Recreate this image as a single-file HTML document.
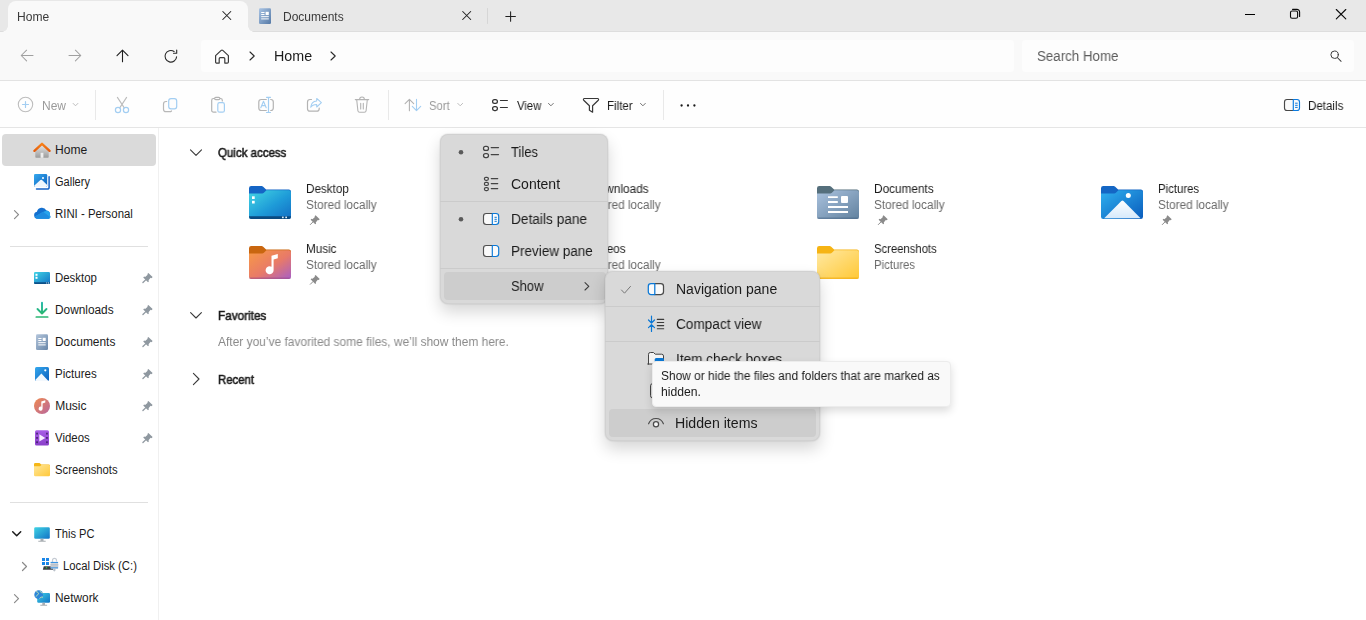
<!DOCTYPE html>
<html lang="en">
<head>
<meta charset="utf-8">
<title>Home - File Explorer</title>
<style>
*{box-sizing:border-box;margin:0;padding:0}
html,body{width:1366px;height:620px;overflow:hidden;background:#fff}
body{font-family:"Liberation Sans",sans-serif;color:#1b1b1b;font-size:12px;position:relative}
.abs{position:absolute}
.t{position:absolute;white-space:nowrap;line-height:16px;will-change:transform;transform-origin:0 0}
.t.nl{will-change:auto}
svg{position:absolute;overflow:visible}
/* ---------- title / tab bar ---------- */
#tabbar{left:0;top:0;width:1366px;height:32px;background:#e8e8e8}
#tab1{left:8px;top:1px;width:240px;height:31px;background:#f9f9f9;border-radius:8px 8px 0 0}
#tab1:before,#tab1:after{content:"";position:absolute;bottom:0;width:6px;height:6px;background:radial-gradient(circle at 0 0,rgba(249,249,249,0) 5.500px,#f9f9f9 6px)}
#tab1:before{left:-6px}
#tab1:after{right:-6px;background:radial-gradient(circle at 100% 0,rgba(249,249,249,0) 5.500px,#f9f9f9 6px)}
/* ---------- address bar ---------- */
#addr{left:0;top:32px;width:1366px;height:48px;background:#f9f9f9}
#addrline{left:0;top:80px;width:1366px;height:1px;background:#e3e3e3}
#crumb{left:201px;top:40px;width:813px;height:32px;background:#fdfdfd;border-radius:4px}
#search{left:1022px;top:40px;width:332px;height:32px;background:#fdfdfd;border-radius:4px}
/* ---------- toolbar ---------- */
#tool{left:0;top:81px;width:1366px;height:46px;background:#fefefe}
#toolline{left:0;top:127px;width:1366px;height:1px;background:#e5e5e5}
.vsep{width:1px;background:#e9e9e9}
/* ---------- nav pane ---------- */
#nav{left:0;top:128px;width:158px;height:492px;background:#fff}
#navdiv{left:158px;top:128px;width:1px;height:492px;background:#f0f0f0}
#navsel{left:2px;top:134px;width:154px;height:32px;background:#dadada;border-radius:4px}
.hsep{left:10px;width:138px;height:1px;background:#e0e0e0}
.nl{font-size:12px;color:#1b1b1b}
/* ---------- main ---------- */
.hd{font-size:12px;color:#1b1b1b;-webkit-text-stroke:0.55px #1b1b1b}
.nm{font-size:12px;color:#1b1b1b}
.sub{font-size:12px;color:#6a6a6a}
/* ---------- menus ---------- */
.menu{background:#d9d9d9;border-radius:8px;box-shadow:0 8px 16px rgba(0,0,0,.16),0 0 2px rgba(0,0,0,.18),inset 0 0 0 1px rgba(0,0,0,.035)}
.mi{font-size:14px;color:#1b1b1b;line-height:20px}
.msep{height:1px;background:#cbcbcb}
.mhl{background:#cdcdcd;border-radius:4px}
#tip{left:651.500px;top:360.500px;width:299px;height:46.500px;background:#f9f9f9;border:1px solid #ececec;border-radius:4px;box-shadow:0 4px 8px rgba(0,0,0,.14)}
</style>
</head>
<body>
<!-- TABBAR -->
<div id="tabbar" class="abs"></div>
<div class="abs" style="left:0;top:31px;width:1366px;height:1px;background:#dddddd"></div>
<div id="tab1" class="abs"></div>
<div class="t" style="left:17.40px;top:9px;transform:scaleX(1.0051);font-size:12px;color:#3a3a3a">Home</div>
<div class="t" style="left:282.80px;top:9px;transform:scaleX(0.9936);font-size:12px;color:#3a3a3a">Documents</div>
<!-- ADDRESS -->
<div id="addr" class="abs"></div>
<div id="addrline" class="abs"></div>
<div id="crumb" class="abs"></div>
<div id="search" class="abs"></div>
<div class="t" style="left:273.58px;top:47px;transform:scaleX(1.0203);font-size:14px;line-height:18px;color:#1b1b1b">Home</div>
<div class="t" style="left:1037.30px;top:47px;transform:scaleX(0.9521);font-size:14px;line-height:18px;color:#5c5c5c">Search Home</div>

<!-- ICONS: title bar -->
<svg style="left:0;top:0" width="1366" height="128" viewBox="0 0 1366 128" fill="none" stroke-linecap="round" stroke-linejoin="round">
 <!-- tab close buttons -->
 <path d="M222.800 11.500l8 8M230.800 11.500l-8 8" stroke="#1f1f1f" stroke-width="1.050"/>
 <path d="M462.700 11.500l8 8M470.700 11.500l-8 8" stroke="#1f1f1f" stroke-width="1.050"/>
 <path d="M487.5 8.5v15" stroke="#d6d6d6" stroke-width="1"/>
 <path d="M505.8 16.5h9.6M510.6 11.7v9.6" stroke="#1f1f1f" stroke-width="1.05"/>
<!-- tab2 icon -->
 <defs><linearGradient id="gTabDoc" x1="0" y1="0" x2="1" y2="1"><stop offset="0" stop-color="#a9c4e4"/><stop offset="1" stop-color="#5579a6"/></linearGradient></defs>
 <rect x="259" y="8.200" width="12" height="15.800" rx="1.200" fill="url(#gTabDoc)" stroke="none"/>
 <path d="M261.200 12.500h3.300M261.200 14.500h3.300M261.200 16.700h7.600M261.200 18.900h7.600" stroke="#fff" stroke-width="1" stroke-linecap="butt"/>
 <rect x="265.600" y="11.800" width="3.200" height="3.300" fill="#fff" stroke="none"/>
 <!-- window controls -->
 <path d="M1245 14.500h10" stroke="#000" stroke-width="1" stroke-linecap="butt"/>
 <rect x="1290.500" y="11" width="7.100" height="7.300" rx="1.600" stroke="#0a0a0a" stroke-width="1.100"/>
 <path d="M1292.600 9.400h4.300a2.700 2.700 0 0 1 2.700 2.700v4.300" stroke="#0a0a0a" stroke-width="1.100"/>
 <path d="M1336.300 9.500l9.500 9.300M1345.800 9.500l-9.500 9.300" stroke="#0a0a0a" stroke-width="1.100"/>
 <!-- nav arrows -->
 <path d="M33 55.5H21.3M26.6 50.2l-5.4 5.3 5.4 5.4" stroke="#a0a0a0" stroke-width="1.05"/>
 <path d="M69 55.5h11.7M75.4 50.2l5.4 5.3-5.4 5.4" stroke="#a0a0a0" stroke-width="1.05"/>
 <path d="M122.5 61.8V50.3M117 55.7l5.5-5.5 5.5 5.5" stroke="#1f1f1f" stroke-width="1.1"/>
 <path d="M176.600 56.700a5.800 5.800 0 1 1-2.500-5.200M176.700 50v3.200h-3.200" stroke="#2a2a2a" stroke-width="1.100"/>
 <!-- breadcrumb home -->
 <path d="M215.6 55.6l5.6-5.2a1.2 1.2 0 0 1 1.6 0l5.6 5.2v6.3a1.2 1.2 0 0 1-1.2 1.2h-2.4v-4.4a1 1 0 0 0-1-1h-3.600a1 1 0 0 0-1 1v4.400h-2.400a1.200 1.200 0 0 1-1.200-1.200z" stroke="#3a3a3a" stroke-width="1.2"/>
 <path d="M250 52l4.200 4-4.200 4" stroke="#2a2a2a" stroke-width="1.1"/>
 <path d="M331 52l4.200 4-4.200 4" stroke="#2a2a2a" stroke-width="1.1"/>
 <!-- search -->
 <circle cx="1334.600" cy="54.700" r="3.700" stroke="#3a3a3a" stroke-width="1"/>
 <path d="M1337.300 57.500l3.800 3.800" stroke="#3a3a3a" stroke-width="1.050"/>
</svg>
<!-- TOOLBAR -->
<div id="tool" class="abs"></div>
<div id="toolline" class="abs"></div>
<div class="t" style="left:41.90px;top:98px;transform:scaleX(0.9860);font-size:12px;color:#9a9a9a">New</div>
<div class="t" style="left:429.20px;top:98px;transform:scaleX(0.9350);font-size:12px;color:#9a9a9a">Sort</div>
<div class="t" style="left:516.50px;top:98px;transform:scaleX(0.9377);font-size:12px;color:#1b1b1b">View</div>
<div class="t" style="left:607.40px;top:98px;transform:scaleX(0.9599);font-size:12px;color:#1b1b1b">Filter</div>
<div class="t" style="left:1308.00px;top:98px;transform:scaleX(0.9624);font-size:12px;color:#1b1b1b">Details</div>
<div class="abs vsep" style="left:95px;top:90px;height:30px"></div>
<div class="abs vsep" style="left:388px;top:90px;height:30px"></div>
<div class="abs vsep" style="left:663px;top:90px;height:30px"></div>

<!-- ICONS: toolbar -->
<svg style="left:0;top:81px" width="1366" height="46" viewBox="0 81 1366 46" fill="none" stroke-linecap="round" stroke-linejoin="round" stroke-width="1.200">
 <!-- New -->
 <circle cx="25.500" cy="104.500" r="7.200" stroke="#bdbdbd" stroke-width="1.100"/>
 <path d="M22.500 104.500h6M25.500 101.500v6" stroke="#a3cef2"/>
 <path d="M73.100 103.400l2.400 2.400 2.400-2.400" stroke="#bcbcbc" stroke-width="1"/>
 <!-- Cut -->
 <path d="M117.400 97.400l6.900 10.500M126.600 97.400l-6.900 10.500" stroke="#bcbcbc" stroke-width="1.100"/>
 <circle cx="118" cy="110" r="2.600" stroke="#a3cef2"/>
 <circle cx="126" cy="110" r="2.600" stroke="#a3cef2"/>
 <!-- Copy -->
 <path d="M166.700 101.500h-0.700a2.500 2.500 0 0 0-2.500 2.500v5.200a2.500 2.500 0 0 0 2.500 2.500h3.800a2.500 2.500 0 0 0 1.700-0.700" stroke="#b8b8b8"/>
 <rect x="168.700" y="98.600" width="8" height="10.200" rx="2.300" stroke="#a3cef2" fill="#fdfdfd"/>
 <!-- Paste -->
 <path d="M216 112.200h-2.500a1.800 1.800 0 0 1-1.800-1.800v-10.100a1.800 1.800 0 0 1 1.800-1.800h1M220 98.500h0.500a1.800 1.800 0 0 1 1.800 1.800v0.700" stroke="#b4b4b4"/>
 <rect x="214.600" y="97.400" width="5.300" height="2.300" rx="1.150" stroke="#b4b4b4" fill="#fdfdfd"/>
 <rect x="217.800" y="102.700" width="6.600" height="9.500" rx="1.800" stroke="#a3cef2" fill="#fdfdfd"/>
 <!-- Rename -->
 <path d="M266.300 99.500h-5a2.500 2.500 0 0 0-2.500 2.500v6a2.500 2.500 0 0 0 2.500 2.500h5M270.700 99.500h0.100a2.500 2.500 0 0 1 2.500 2.500v6a2.500 2.500 0 0 1-2.500 2.500h-0.100" stroke="#b4b4b4"/>
 <path d="M266.500 97.300h4M266.500 112.500h4M268.500 97.300v15.200" stroke="#a3cef2"/>
 <path d="M260.800 107.700l2.700-6.500 2.700 6.500M261.800 105.600h3.400" stroke="#a3cef2" stroke-width="1.100"/>
 <!-- Share -->
 <path d="M311.500 99.500h-1.500a2.500 2.500 0 0 0-2.500 2.500v6.700a2.500 2.500 0 0 0 2.500 2.500h6.700a2.500 2.500 0 0 0 2.500-2.500v-0.700" stroke="#b4b4b4"/>
 <path d="M316.700 98.400l4.700 4.300-4.700 4.300v-2.600c-3 0-4.800 0.800-6 2.800 0.300-3.500 2.300-6 6-6.300z" stroke="#a3cef2" stroke-width="1.050"/>
 <!-- Delete -->
 <path d="M355.300 99.600h13.400M359.600 99.400a2.400 2.400 0 0 1 4.800 0M356.700 99.800l1.200 10.900a1.800 1.800 0 0 0 1.800 1.600h4.600a1.800 1.800 0 0 0 1.800-1.600l1.200-10.900M360.700 103.200v5.700M363.300 103.200v5.700" stroke="#b4b4b4" stroke-width="1.100"/>
 <!-- Sort -->
 <path d="M409.400 110.700V99.300M405.100 103.600l4.300-4.300 4.300 4.300" stroke="#b2b2b2" stroke-width="1.100"/>
 <path d="M416.500 99.200v11.400M412.300 106.400l4.200 4.300 4.200-4.300" stroke="#a3cef2" stroke-width="1.100"/>
 <path d="M457.800 103.400l2.400 2.400 2.400-2.400" stroke="#bcbcbc" stroke-width="1"/>
 <!-- View -->
 <rect x="492.600" y="99.500" width="4.800" height="3.900" rx="1.900" stroke="#333" stroke-width="1.250"/>
 <rect x="492.600" y="106.600" width="4.800" height="3.900" rx="1.900" stroke="#333" stroke-width="1.250"/>
 <path d="M500.400 100.500h7M500.400 107.500h7" stroke="#333" stroke-width="1.150"/>
 <path d="M548.500 103.400l2.400 2.400 2.400-2.400" stroke="#707070" stroke-width="1"/>
 <!-- Filter -->
 <path d="M584.400 98.500h13.200a1 1 0 0 1 0.700 1.700l-5.700 5.500v6.500l-3.200-1.900v-4.600l-5.700-5.500a1 1 0 0 1 0.700-1.700z" stroke="#383838" stroke-width="1.200" fill="#fafafa"/>
 <path d="M640.500 103.400l2.400 2.400 2.400-2.400" stroke="#707070" stroke-width="1"/>
 <!-- more -->
 <circle cx="681.600" cy="105.500" r="1.150" fill="#1b1b1b"/>
 <circle cx="688" cy="105.500" r="1.150" fill="#1b1b1b"/>
 <circle cx="694.400" cy="105.500" r="1.150" fill="#1b1b1b"/>
 <!-- Details -->
 <rect x="1284.500" y="99.500" width="15" height="11" rx="2.500" fill="#fafafa"/>
 <path d="M1293.300 99.500h-6.300a2.500 2.500 0 0 0-2.500 2.500v6a2.500 2.500 0 0 0 2.500 2.500h6.300" stroke="#484848" stroke-width="1.150"/>
 <path d="M1293.300 99.500h3.700a2.500 2.500 0 0 1 2.500 2.500v6a2.500 2.500 0 0 1-2.500 2.500h-3.700z" stroke="#0a7adf" stroke-width="1.150"/>
 <path d="M1295.100 103.200h2.600M1295.100 105.300h2.600M1295.100 107.400h2.600" stroke="#0a7adf" stroke-width="1" stroke-linecap="butt"/>
</svg>
<!-- NAV -->
<div id="nav" class="abs"></div>
<div id="navdiv" class="abs"></div>
<div id="navsel" class="abs"></div>
<div class="t nl" style="left:55.40px;top:142px;transform:scaleX(1.0051);">Home</div>
<div class="t nl" style="left:55.40px;top:174px;transform:scaleX(0.9182);">Gallery</div>
<div class="t nl" style="left:55.40px;top:206px;transform:scaleX(0.9489);">RINI - Personal</div>
<div class="abs hsep" style="top:246px"></div>
<div class="t nl" style="left:55.40px;top:270px;transform:scaleX(0.9516);">Desktop</div>
<div class="t nl" style="left:55.40px;top:302px;transform:scaleX(0.9871);">Downloads</div>
<div class="t nl" style="left:55.40px;top:334px;transform:scaleX(0.9952);">Documents</div>
<div class="t nl" style="left:55.20px;top:366px;transform:scaleX(0.9620);">Pictures</div>
<div class="t nl" style="left:55.20px;top:398px;">Music</div>
<div class="t nl" style="left:55.00px;top:430px;transform:scaleX(0.9513);">Videos</div>
<div class="t nl" style="left:55.20px;top:462px;transform:scaleX(0.9385);">Screenshots</div>
<div class="abs hsep" style="top:502px"></div>
<div class="t nl" style="left:55.00px;top:526px;transform:scaleX(0.9254);">This PC</div>
<div class="t nl" style="left:62.90px;top:558px;transform:scaleX(0.9392);">Local Disk (C:)</div>
<div class="t nl" style="left:55.30px;top:590px;transform:scaleX(0.9887);">Network</div>

<!-- ICONS: nav pane -->
<svg style="left:0;top:128px" width="158" height="492" viewBox="0 128 158 492" fill="none" stroke-linecap="round" stroke-linejoin="round">
 <defs>
  <linearGradient id="gHomeB" x1="0" y1="0" x2="0" y2="1"><stop offset="0" stop-color="#e9e9e9"/><stop offset="1" stop-color="#9b9b9b"/></linearGradient>
  <linearGradient id="gRoof" x1="0" y1="143" x2="0" y2="152" gradientUnits="userSpaceOnUse"><stop offset="0" stop-color="#f9841a"/><stop offset="1" stop-color="#e2570a"/></linearGradient>
  <linearGradient id="gBlue" x1="0" y1="0" x2="1" y2="1"><stop offset="0" stop-color="#35a9ee"/><stop offset="1" stop-color="#0c5fbd"/></linearGradient>
  <linearGradient id="gCyan" x1="0" y1="0" x2="1" y2="1"><stop offset="0" stop-color="#3fd3e4"/><stop offset="1" stop-color="#1273c6"/></linearGradient>
  <linearGradient id="gDl" x1="0" y1="0" x2="0" y2="1"><stop offset="0" stop-color="#1fb7a6"/><stop offset="1" stop-color="#2bb673"/></linearGradient>
  <linearGradient id="gDoc" x1="0" y1="0" x2="1" y2="1"><stop offset="0" stop-color="#b4c6dc"/><stop offset="1" stop-color="#6886a8"/></linearGradient>
  <linearGradient id="gMus" x1="0" y1="0" x2="1" y2="1"><stop offset="0" stop-color="#f08a4e"/><stop offset="1" stop-color="#b8679f"/></linearGradient>
  <linearGradient id="gVid" x1="0" y1="0" x2="0" y2="1"><stop offset="0" stop-color="#a75fe6"/><stop offset="1" stop-color="#8a3fc9"/></linearGradient>
  <linearGradient id="gFol" x1="0" y1="0" x2="1" y2="1"><stop offset="0" stop-color="#ffe79a"/><stop offset="1" stop-color="#ffc83a"/></linearGradient>
  <linearGradient id="gCloud" x1="0" y1="0" x2="0" y2="1"><stop offset="0" stop-color="#1b6fd1"/><stop offset="1" stop-color="#2a9df0"/></linearGradient>
 </defs>
 <!-- Home -->
 <path d="M35.300 150.200l6.700-6 6.700 6v6.800a0.800 0.800 0 0 1-0.800 0.800h-11.800a0.800 0.800 0 0 1-0.800-0.800z" fill="url(#gHomeB)"/>
 <rect x="40.600" y="152.800" width="2.800" height="5" fill="#ededed"/>
 <path d="M34.400 150.900l7.600-7.100 7.600 7.100" stroke="url(#gRoof)" stroke-width="2.300"/>
 <!-- Gallery -->
 <path d="M49.100 176.800v10.700a1.600 1.600 0 0 1-1.600 1.600h-11" stroke="#1763c6" stroke-width="1.500"/>
 <rect x="34" y="174" width="13.200" height="12.900" rx="1.300" fill="url(#gBlue)"/>
 <path d="M34.100 185.800l6.300-5.800a1.200 1.200 0 0 1 1.600 0l5.200 4.900v0.700a1.300 1.300 0 0 1-1.300 1.300h-10.600a1.300 1.300 0 0 1-1.200-1.100z" fill="#f1f7fd"/>
 <circle cx="43" cy="177.900" r="1" fill="#fff"/>
 <!-- OneDrive -->
 <path d="M37.800 218.800a3.600 3.600 0 0 1-0.900-7.100 5.100 5.100 0 0 1 9.500-1.300 3.700 3.700 0 0 1 3.500 4.800 2.500 2.500 0 0 1-1.200 3.600z" fill="#1470cf"/>
 <path d="M37.800 218.800a3.600 3.600 0 0 1-2.800-2.300l8-4.600 3.600-1.400a3.700 3.700 0 0 1 3.300 4.700 2.500 2.500 0 0 1-1.200 3.600z" fill="#28a4ec"/>
 <path d="M35 216.500l8-4.700 6.500 4.600a2.500 2.500 0 0 1-0.800 2.400h-10.900a3.600 3.600 0 0 1-2.800-2.300z" fill="#1f8ce0"/>
 <path d="M14.500 210.700l4 4-4 4" stroke="#8a8a8a" stroke-width="1.200"/>
 <!-- Desktop -->
 <rect x="34" y="272" width="16" height="12" rx="1.300" fill="url(#gCyan)"/>
 <path d="M34 282.300h16v0.400a1.300 1.300 0 0 1-1.300 1.300h-13.400a1.300 1.300 0 0 1-1.300-1.300z" fill="#0c4f86"/>
 <rect x="35.500" y="273.800" width="2" height="2" fill="#fff"/><rect x="35.500" y="276.800" width="2" height="2" fill="#fff"/>
 <rect x="46.200" y="282.500" width="1" height="1" fill="#e9f4fb"/><rect x="48" y="282.500" width="1" height="1" fill="#e9f4fb"/>
 <!-- Downloads -->
 <path d="M42 302.800v10.400M37.500 309l4.500 4.500 4.500-4.500" stroke="url(#gDl)" stroke-width="1.900"/>
 <path d="M36.300 317h11.400" stroke="#2bb673" stroke-width="1.700"/>
 <!-- Documents -->
 <rect x="36" y="334.300" width="12" height="15.700" rx="1.300" fill="url(#gDoc)"/>
 <path d="M38.300 338.500h3.200M38.300 340.500h3.200M38.300 342.700h7.400M38.300 344.900h7.400" stroke="#fff" stroke-width="1" stroke-linecap="butt"/>
 <rect x="42.700" y="337.800" width="3" height="3.200" fill="#fff"/>
 <!-- Pictures -->
 <rect x="35" y="367" width="14" height="14" rx="1.500" fill="url(#gBlue)"/>
 <path d="M35.200 380l6.200-6.600 6.800 7.300a1.500 1.500 0 0 1-0.700 0.300h-11a1.500 1.500 0 0 1-1.300-1z" fill="#f3f8fd"/>
 <circle cx="45.300" cy="370.300" r="1.100" fill="#fff"/>
 <!-- Music -->
 <circle cx="42" cy="406" r="8" fill="url(#gMus)"/>
 <path d="M41.300 401.500l4-1.200v2.300l-2.700 0.800v5.300a2 2 0 1 1-1.300-1.900z" fill="#fff"/>
 <!-- Videos -->
 <rect x="35" y="430.300" width="14" height="15.200" rx="1.500" fill="url(#gVid)"/>
 <path d="M39.300 434.300l6 3.600-6 3.600z" fill="#f6eefe"/>
 <g fill="#3d1c66"><rect x="36.300" y="432.700" width="1.500" height="1.800"/><rect x="36.300" y="437" width="1.500" height="1.800"/><rect x="36.300" y="441.300" width="1.500" height="1.800"/><rect x="46.200" y="432.700" width="1.500" height="1.800"/><rect x="46.200" y="437" width="1.500" height="1.800"/><rect x="46.200" y="441.300" width="1.500" height="1.800"/></g>
 <!-- Screenshots -->
 <path d="M34 464.200a1.300 1.300 0 0 1 1.300-1.300h4.200l1.800 1.700h7.400a1.300 1.300 0 0 1 1.300 1.300v2h-16z" fill="#f5b615"/>
 <path d="M34 466.200h6l1.500-1.300h7.200a1.300 1.300 0 0 1 1.300 1.300v8.800a1.300 1.300 0 0 1-1.300 1.300h-13.400a1.300 1.300 0 0 1-1.300-1.300z" fill="url(#gFol)"/>
 <!-- This PC -->
 <path d="M12.700 531.800l4 4 4-4" stroke="#1b1b1b" stroke-width="1.500"/>
 <rect x="34.200" y="527.300" width="15.600" height="11.400" rx="1.300" fill="url(#gCyan)"/>
 <path d="M40.500 538.700h3v2h-3zM38.300 540.700h7.400v1h-7.400z" fill="#a9aeb3" stroke="none"/>
 <!-- Local disk -->
 <path d="M22.500 562.500l4 4-4 4" stroke="#8a8a8a" stroke-width="1.200"/>
 <g fill="#1a86e8"><rect x="42" y="558" width="3" height="3"/><rect x="46" y="558" width="3" height="3"/><rect x="42" y="562" width="3" height="3"/><rect x="46" y="562" width="3" height="3"/></g>
 <path d="M43.800 566.200h9.200v3.500h-10.200z" fill="#3c3f44"/>
 <rect x="45.800" y="567.200" width="1.300" height="1.100" fill="#36d84a"/>
 <path d="M52.500 562v-1.600a2 2 0 0 1 4 0v0.600" stroke="#c5cbd3" stroke-width="1.200"/>
 <rect x="50.600" y="561.900" width="7.500" height="6.800" rx="0.800" fill="#cfd4db"/>
 <rect x="50.600" y="561.900" width="7.500" height="1.100" fill="#3b95e4"/>
 <rect x="50.600" y="567.300" width="7.500" height="1.100" fill="#3b95e4"/>
 <path d="M50.600 564.600h7.500M50.600 566h7.500" stroke="#aab2bd" stroke-width="0.600"/>
 <path d="M53.200 568.700h2.300v1.600a1.150 1.150 0 0 1-2.300 0z" fill="#b9c0c9"/>
 <!-- Network -->
 <path d="M14.500 594.700l4 4-4 4" stroke="#8a8a8a" stroke-width="1.200"/>
 <rect x="37.200" y="593" width="12.800" height="9.700" rx="1.200" fill="url(#gCyan)"/>
 <path d="M42.300 602.700h2.700v2h-2.700zM40.300 604.700h6.800v1h-6.800z" fill="#a9aeb3"/>
 <circle cx="38.700" cy="594.700" r="4.400" fill="#2d86d9"/>
 <path d="M36.500 591.700c1.300 0.300 2.300 1.200 2 2.200s-1.800 1-2.300 2.300M40.300 591c-0.300 1 0.700 1.600 2 1.800M39.800 598.300c0.300-1.100 1.500-1.400 2.800-1.200" stroke="#bfe3b4" stroke-width="1"/>
 <!--pins--><path d="M152.62 277.12L151.56 278.18L150.64 277.83L148.52 280.37L148.94 281.36L148.03 282.28L143.22 277.47L144.14 276.56L145.13 276.98L147.67 274.86L147.32 273.94L148.38 272.88z" fill="#8f98a0"/><path d="M145.90 279.60 L142.93 282.57" stroke="#8f98a0" stroke-width="1.3" stroke-linecap="round"/><path d="M152.62 309.12L151.56 310.18L150.64 309.83L148.52 312.37L148.94 313.36L148.03 314.28L143.22 309.47L144.14 308.56L145.13 308.98L147.67 306.86L147.32 305.94L148.38 304.88z" fill="#8f98a0"/><path d="M145.90 311.60 L142.93 314.57" stroke="#8f98a0" stroke-width="1.3" stroke-linecap="round"/><path d="M152.62 341.12L151.56 342.18L150.64 341.83L148.52 344.37L148.94 345.36L148.03 346.28L143.22 341.47L144.14 340.56L145.13 340.98L147.67 338.86L147.32 337.94L148.38 336.88z" fill="#8f98a0"/><path d="M145.90 343.60 L142.93 346.57" stroke="#8f98a0" stroke-width="1.3" stroke-linecap="round"/><path d="M152.62 373.12L151.56 374.18L150.64 373.83L148.52 376.37L148.94 377.36L148.03 378.28L143.22 373.47L144.14 372.56L145.13 372.98L147.67 370.86L147.32 369.94L148.38 368.88z" fill="#8f98a0"/><path d="M145.90 375.60 L142.93 378.57" stroke="#8f98a0" stroke-width="1.3" stroke-linecap="round"/><path d="M152.62 405.12L151.56 406.18L150.64 405.83L148.52 408.37L148.94 409.36L148.03 410.28L143.22 405.47L144.14 404.56L145.13 404.98L147.67 402.86L147.32 401.94L148.38 400.88z" fill="#8f98a0"/><path d="M145.90 407.60 L142.93 410.57" stroke="#8f98a0" stroke-width="1.3" stroke-linecap="round"/><path d="M152.62 437.12L151.56 438.18L150.64 437.83L148.52 440.37L148.94 441.36L148.03 442.28L143.22 437.47L144.14 436.56L145.13 436.98L147.67 434.86L147.32 433.94L148.38 432.88z" fill="#8f98a0"/><path d="M145.90 439.60 L142.93 442.57" stroke="#8f98a0" stroke-width="1.3" stroke-linecap="round"/>
</svg>
<!-- MAIN -->
<div class="t hd" style="left:218.00px;top:145px;transform:scaleX(0.9586);">Quick access</div>
<div class="t hd" style="left:218.00px;top:308px;transform:scaleX(0.9808);">Favorites</div>
<div class="t hd" style="left:218.30px;top:372px;transform:scaleX(0.9486);">Recent</div>
<div class="t sub" style="left:218.00px;top:334px;transform:scaleX(0.9956);color:#8a8a8a">After you’ve favorited some files, we’ll show them here.</div>

<div class="t nm" style="left:306.30px;top:181px;transform:scaleX(0.9741);">Desktop</div>
<div class="t sub" style="left:306.40px;top:197px;transform:scaleX(0.9801);">Stored locally</div>
<div class="t nm" style="left:306.30px;top:241px;transform:scaleX(0.9733);">Music</div>
<div class="t sub" style="left:306.40px;top:257px;transform:scaleX(0.9801);">Stored locally</div>
<div class="t nm" style="left:590.30px;top:181px;transform:scaleX(0.9888);">Downloads</div>
<div class="t sub" style="left:590.40px;top:197px;transform:scaleX(0.9801);">Stored locally</div>
<div class="t nm" style="left:590.00px;top:241px;transform:scaleX(0.9760);">Videos</div>
<div class="t sub" style="left:590.40px;top:257px;transform:scaleX(0.9801);">Stored locally</div>
<div class="t nm" style="left:874.30px;top:181px;transform:scaleX(0.9837);">Documents</div>
<div class="t sub" style="left:874.40px;top:197px;transform:scaleX(0.9801);">Stored locally</div>
<div class="t nm" style="left:874.30px;top:241px;transform:scaleX(0.9400);">Screenshots</div>
<div class="t sub" style="left:874.40px;top:257px;transform:scaleX(0.9458);">Pictures</div>
<div class="t nm" style="left:1158.40px;top:181px;transform:scaleX(0.9481);">Pictures</div>
<div class="t sub" style="left:1158.40px;top:197px;transform:scaleX(0.9801);">Stored locally</div>


<!-- ICONS: main -->
<svg style="left:159px;top:128px" width="1207" height="492" viewBox="159 128 1207 492" fill="none" stroke-linecap="round" stroke-linejoin="round">
 <defs>
  <linearGradient id="fDesk" x1="0" y1="0" x2="1" y2="1"><stop offset="0" stop-color="#44d6e3"/><stop offset=".55" stop-color="#1e9bd8"/><stop offset="1" stop-color="#136ec4"/></linearGradient>
  <linearGradient id="fMus" x1="0" y1="0" x2="1" y2="1"><stop offset="0" stop-color="#f89a45"/><stop offset=".55" stop-color="#e87a68"/><stop offset="1" stop-color="#a85fc6"/></linearGradient>
  <linearGradient id="fDoc" x1="0" y1="0" x2="1" y2="1"><stop offset="0" stop-color="#aac2de"/><stop offset="1" stop-color="#62829f"/></linearGradient>
  <linearGradient id="fPic" x1="0" y1="0" x2="1" y2="1"><stop offset="0" stop-color="#2fb0ef"/><stop offset="1" stop-color="#0a5cbc"/></linearGradient>
  <linearGradient id="fScr" x1="0" y1="0" x2="1" y2="1"><stop offset="0" stop-color="#ffe9a3"/><stop offset="1" stop-color="#ffc836"/></linearGradient>
  <linearGradient id="gSnow" x1="0" y1="0" x2="0" y2="1"><stop offset="0" stop-color="#ffffff"/><stop offset="1" stop-color="#d6e9fb"/></linearGradient>
 </defs>
 <path d="M190.500 149.800l5.500 5.500 5.500-5.500" stroke="#3a3a3a" stroke-width="1.100"/>
 <path d="M190.600 312.600l5.400 5.400 5.400-5.400" stroke="#3a3a3a" stroke-width="1.100"/>
 <path d="M193.400 373.400l5.600 5.600-5.600 5.600" stroke="#3a3a3a" stroke-width="1.100"/>
 <g transform="translate(249 186)">
  <path d="M0 2.200a2.200 2.200 0 0 1 2.200-2.200h10.300a2.500 2.500 0 0 1 1.700 0.700l2.900 2.900h22.700a2.200 2.200 0 0 1 2.200 2.200v6.400h-42z" fill="#1565c5"/>
  <path d="M0 7.500h13.200a2.500 2.500 0 0 0 1.700-0.700l2.600-2.500h22.300a2.200 2.200 0 0 1 2.200 2.200v24.300a2.200 2.200 0 0 1-2.200 2.200h-37.600a2.200 2.200 0 0 1-2.200-2.200z" fill="url(#fDesk)"/>
  <path d="M0 30.300h42v0.500a2.200 2.200 0 0 1-2.200 2.200h-37.600a2.200 2.200 0 0 1-2.200-2.200z" fill="#0b4a80"/>
  <rect x="3" y="10.300" width="2.700" height="2.700" fill="#fff"/><rect x="3" y="14.800" width="2.700" height="2.700" fill="#fff"/>
  <rect x="33" y="30.600" width="1.700" height="1.600" fill="#dfeefa"/><rect x="36.300" y="30.600" width="1.700" height="1.600" fill="#dfeefa"/>
 </g>
 <g transform="translate(249 246)">
  <path d="M0 2.200a2.200 2.200 0 0 1 2.200-2.200h10.300a2.500 2.500 0 0 1 1.700 0.700l2.900 2.900h22.700a2.200 2.200 0 0 1 2.200 2.200v6.400h-42z" fill="#c9660f"/>
  <path d="M0 7.500h13.200a2.500 2.500 0 0 0 1.700-0.700l2.600-2.500h22.300a2.200 2.200 0 0 1 2.200 2.200v24.300a2.200 2.200 0 0 1-2.200 2.200h-37.600a2.200 2.200 0 0 1-2.200-2.200z" fill="url(#fMus)"/>
  <path d="M0 31.500h42a2.200 2.200 0 0 1-2.200 1.500h-37.600a2.200 2.200 0 0 1-2.200-1.500z" fill="#9b4a86" opacity=".55"/>
  <path d="M22.500 9.800l6.300-1.800v4.300l-4.200 1.300v10.600a4 4 0 1 1-2.100-3.500z" fill="#fff"/>
 </g>
 <g transform="translate(817 186)">
  <path d="M0 2.200a2.200 2.200 0 0 1 2.200-2.200h10.300a2.500 2.500 0 0 1 1.700 0.700l2.900 2.900h22.700a2.200 2.200 0 0 1 2.200 2.200v6.400h-42z" fill="#556f7c"/>
  <path d="M0 7.500h13.200a2.500 2.500 0 0 0 1.700-0.700l2.600-2.500h22.300a2.200 2.200 0 0 1 2.200 2.200v24.300a2.200 2.200 0 0 1-2.200 2.200h-37.600a2.200 2.200 0 0 1-2.200-2.200z" fill="url(#fDoc)"/>
  <path d="M0 31.500h42a2.200 2.200 0 0 1-2.200 1.500h-37.600a2.200 2.200 0 0 1-2.200-1.500z" fill="#4d6a8a" opacity=".6"/>
  <path d="M11 11.100h9.800M11 16h9.800M11 21h20M11 26h20" stroke="#fff" stroke-width="1.900" stroke-linecap="butt"/>
  <rect x="24" y="10.100" width="7" height="6.900" rx="1" fill="#fff"/>
 </g>
 <g transform="translate(817 246)">
  <path d="M0 2.200a2.200 2.200 0 0 1 2.200-2.200h10.300a2.500 2.500 0 0 1 1.700 0.700l2.900 2.900h22.700a2.200 2.200 0 0 1 2.200 2.200v6.400h-42z" fill="#f6b414"/>
  <path d="M0 7.500h13.200a2.500 2.500 0 0 0 1.700-0.700l2.600-2.500h22.300a2.200 2.200 0 0 1 2.200 2.200v24.300a2.200 2.200 0 0 1-2.200 2.200h-37.600a2.200 2.200 0 0 1-2.200-2.200z" fill="url(#fScr)"/>
  <path d="M0 31.500h42a2.200 2.200 0 0 1-2.200 1.500h-37.600a2.200 2.200 0 0 1-2.200-1.500z" fill="#f2ae16" opacity=".7"/>
 </g>
 <g transform="translate(1101 186)">
  <path d="M0 2.200a2.200 2.200 0 0 1 2.200-2.200h10.300a2.500 2.500 0 0 1 1.700 0.700l2.900 2.900h22.700a2.200 2.200 0 0 1 2.200 2.200v6.400h-42z" fill="#1466c4"/>
  <path d="M0 7.500h13.200a2.500 2.500 0 0 0 1.700-0.700l2.600-2.500h22.300a2.200 2.200 0 0 1 2.200 2.200v24.300a2.200 2.200 0 0 1-2.200 2.200h-37.600a2.200 2.200 0 0 1-2.200-2.200z" fill="url(#fPic)"/>
  <path d="M3.200 32.300l17.200-17.400a1.500 1.500 0 0 1 2.100 0l17.100 17.400z" fill="url(#gSnow)"/>
  <circle cx="27.300" cy="9.600" r="2.500" fill="#fff"/>
 </g>
 <path d="M319.72 219.29L318.69 220.32L317.80 219.98L315.74 222.45L316.15 223.41L315.26 224.30L310.60 219.63L311.49 218.74L312.45 219.15L314.92 217.10L314.57 216.21L315.60 215.18z" fill="#8b8b8b"/><path d="M313.20 221.69 L310.32 224.57" stroke="#8b8b8b" stroke-width="1.00" stroke-linecap="round"/><path d="M319.72 278.99L318.69 280.02L317.80 279.68L315.74 282.15L316.15 283.11L315.26 284.00L310.60 279.33L311.49 278.44L312.45 278.85L314.92 276.80L314.57 275.91L315.60 274.88z" fill="#8b8b8b"/><path d="M313.20 281.39 L310.32 284.27" stroke="#8b8b8b" stroke-width="1.00" stroke-linecap="round"/><path d="M887.72 219.29L886.69 220.32L885.80 219.98L883.74 222.45L884.15 223.41L883.26 224.30L878.60 219.63L879.49 218.74L880.45 219.15L882.92 217.10L882.57 216.21L883.60 215.18z" fill="#8b8b8b"/><path d="M881.20 221.69 L878.32 224.57" stroke="#8b8b8b" stroke-width="1.00" stroke-linecap="round"/><path d="M1171.72 219.29L1170.69 220.32L1169.80 219.98L1167.74 222.45L1168.15 223.41L1167.26 224.30L1162.60 219.63L1163.49 218.74L1164.45 219.15L1166.92 217.10L1166.57 216.21L1167.60 215.18z" fill="#8b8b8b"/><path d="M1165.20 221.69 L1162.32 224.57" stroke="#8b8b8b" stroke-width="1.00" stroke-linecap="round"/>
</svg>
<!-- MENU 1 -->
<div class="abs menu" id="m1" style="left:440px;top:134px;width:168px;height:170px"></div>
<div class="abs msep" style="left:440px;top:201px;width:168px"></div>
<div class="abs msep" style="left:440px;top:268px;width:168px"></div>
<div class="abs mhl" style="left:444px;top:272px;width:162px;height:27.700px"></div>
<div class="t mi" style="left:511.00px;top:142px;transform:scaleX(0.9298);">Tiles</div>
<div class="t mi" style="left:511.30px;top:174px;transform:scaleX(0.9950);">Content</div>
<div class="t mi" style="left:510.52px;top:209px;transform:scaleX(0.9774);">Details pane</div>
<div class="t mi" style="left:510.54px;top:241px;transform:scaleX(0.9638);">Preview pane</div>
<div class="t mi" style="left:511.30px;top:276px;transform:scaleX(0.9273);">Show</div>

<svg style="left:440px;top:134px" width="167" height="169" viewBox="440 134 167 169" fill="none" stroke-linecap="round" stroke-linejoin="round" stroke-width="1">
 <circle cx="461" cy="152.200" r="2.300" fill="#5a5a5a"/>
 <circle cx="461" cy="219.200" r="2.300" fill="#5a5a5a"/>
 <!-- Tiles -->
 <rect x="483.500" y="146.400" width="5" height="4" rx="2" fill="#e6e6e6" stroke="#444" stroke-width="1.250"/>
 <rect x="483.500" y="153.500" width="5" height="4" rx="2" fill="#e6e6e6" stroke="#444" stroke-width="1.250"/>
 <path d="M491.200 147.500h7.300M491.200 154.500h7.300" stroke="#444" stroke-width="1.250"/>
 <!-- Content -->
 <rect x="484.400" y="177.300" width="4" height="3" rx="1.500" fill="#e6e6e6" stroke="#444" stroke-width="1.250"/>
 <rect x="484.400" y="182.400" width="4" height="3" rx="1.500" fill="#e6e6e6" stroke="#444" stroke-width="1.250"/>
 <rect x="484.400" y="187.500" width="4" height="3" rx="1.500" fill="#e6e6e6" stroke="#444" stroke-width="1.250"/>
 <path d="M491.300 178.600h6.400M491.300 183.600h6.400M491.300 188.600h6.400" stroke="#444" stroke-width="1.250"/>
 <!-- Details pane -->
 <rect x="483.500" y="213.500" width="15.200" height="11" rx="2.700" fill="#fafafa"/>
 <path d="M492.300 213.500h-6.100a2.700 2.700 0 0 0-2.700 2.700v5.600a2.700 2.700 0 0 0 2.700 2.700h6.100" stroke="#505050" stroke-width="1.150"/>
 <path d="M492.300 213.500h3.700a2.700 2.700 0 0 1 2.700 2.700v5.600a2.700 2.700 0 0 1-2.700 2.700h-3.700z" stroke="#0a78d6" stroke-width="1.150"/>
 <path d="M494.500 217.300h2.300M494.500 219.300h2.300M494.500 221.300h2.300" stroke="#0a78d6" stroke-width="1" stroke-linecap="butt"/>
 <!-- Preview pane -->
 <rect x="483.500" y="245.500" width="15.200" height="11" rx="2.700" fill="#fafafa"/>
 <path d="M492.300 245.500h-6.100a2.700 2.700 0 0 0-2.700 2.700v5.600a2.700 2.700 0 0 0 2.700 2.700h6.100" stroke="#505050" stroke-width="1.150"/>
 <path d="M492.300 245.500h3.700a2.700 2.700 0 0 1 2.700 2.700v5.600a2.700 2.700 0 0 1-2.700 2.700h-3.700z" stroke="#0a78d6" stroke-width="1.150"/>
 <!-- Show chevron -->
 <path d="M585 282.600l3.800 3.700-3.800 3.700" stroke="#3c3c3c" stroke-width="1.100"/>
</svg>
<!-- MENU 2 -->
<div class="abs menu" id="m2" style="left:605px;top:271px;width:215px;height:170px"></div>
<div class="abs msep" style="left:605px;top:306px;width:215px"></div>
<div class="abs msep" style="left:605px;top:341px;width:215px"></div>
<div class="abs mhl" style="left:609px;top:409px;width:207px;height:28px"></div>
<div class="t mi" style="left:675.50px;top:279px;">Navigation pane</div>
<div class="t mi" style="left:676.30px;top:314px;transform:scaleX(0.9718);">Compact view</div>
<div class="t mi" style="left:675.53px;top:349px;transform:scaleX(0.9737);">Item check boxes</div>
<div class="t mi" style="left:675.51px;top:381px;transform:scaleX(0.9864);">File name extensions</div>
<div class="t mi" style="left:675.49px;top:413px;transform:scaleX(1.0099);">Hidden items</div>

<svg style="left:605px;top:271px" width="215" height="170" viewBox="605 271 215 170" fill="none" stroke-linecap="round" stroke-linejoin="round" stroke-width="1">
 <path d="M621.500 290l3 3.200 6-6.800" stroke="#777" stroke-width="1"/>
 <!-- Navigation pane -->
 <rect x="648.300" y="283.500" width="15.200" height="11" rx="2.700" fill="#fafafa"/>
 <path d="M654.800 283.500h6a2.700 2.700 0 0 1 2.700 2.700v5.600a2.700 2.700 0 0 1-2.700 2.700h-6" stroke="#4a4a4a" stroke-width="1.250"/>
 <path d="M654.800 283.500h-3.800a2.700 2.700 0 0 0-2.700 2.700v5.600a2.700 2.700 0 0 0 2.700 2.700h3.800z" stroke="#0a78d6" stroke-width="1.250"/>
 <!-- Compact view -->
 <path d="M651.500 316.200v6.600M648.500 320l3 3 3-3M651.500 331.500v-6.600M648.500 327.700l3-3 3 3" stroke="#0a78d6" stroke-width="1.200"/>
 <path d="M657.300 319.400h6.400M657.300 322.500h6.400M657.300 325.600h6.400M657.300 328.700h6.400" stroke="#3c3c3c" stroke-width="1.100"/>
 <!-- Item check boxes -->
 <path d="M648.500 364v-9.700a1.800 1.800 0 0 1 1.800-1.800h3.200l1.700 1.700h6.500a1.800 1.800 0 0 1 1.800 1.800v8h-15.500z" stroke="#444" fill="#f3f3f3"/>
 <rect x="654.700" y="358" width="9.300" height="8" rx="1.500" fill="#0a78d6"/>
 <!-- File name extensions -->
 <rect x="650.500" y="383.500" width="12" height="14.500" rx="2.300" stroke="#444"/>
 <!-- Hidden items -->
 <path d="M648.600 423.800c1.200-3.300 4-5.300 7.400-5.300s6.200 2 7.400 5.300" stroke="#4a4a4a" stroke-width="1.150"/>
 <circle cx="656" cy="424.200" r="2.600" stroke="#4a4a4a" stroke-width="1.250" fill="#f6f6f6"/>
</svg>
<!-- TOOLTIP -->
<div id="tip" class="abs"></div>
<div class="t" style="left:661.30px;top:368px;transform:scaleX(0.9928);font-size:12px;color:#1b1b1b">Show or hide the files and folders that are marked as</div>
<div class="t" style="left:660.90px;top:384px;transform:scaleX(1.0145);font-size:12px;color:#1b1b1b">hidden.</div>
</body>
</html>
